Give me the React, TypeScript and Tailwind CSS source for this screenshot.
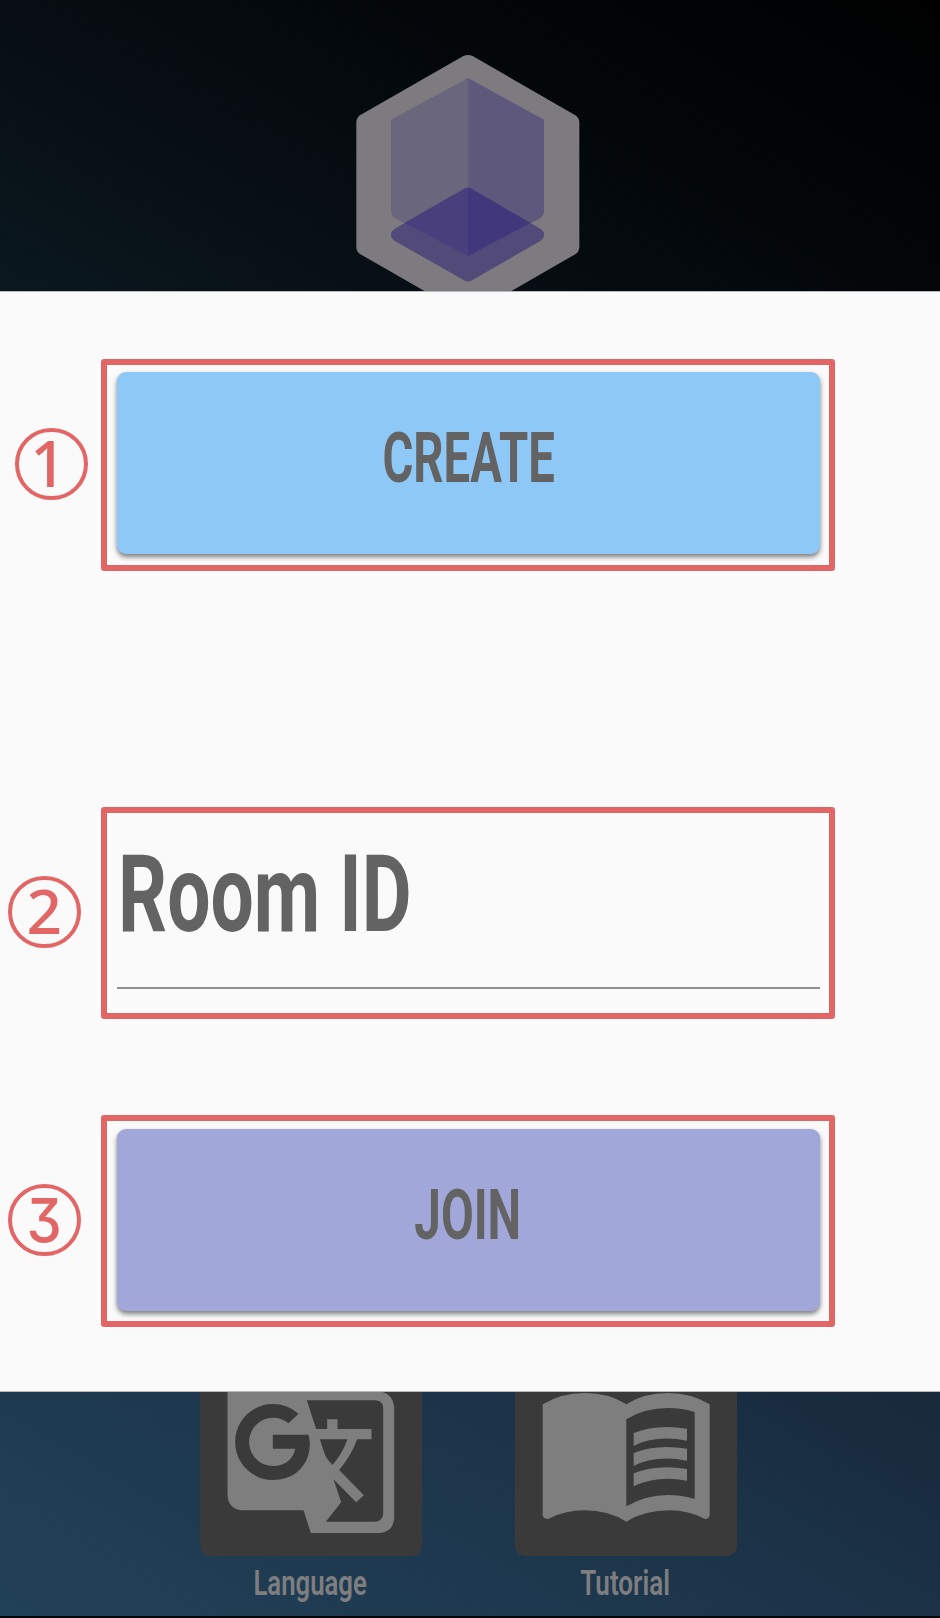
import type { ReactNode } from "react";

function Logo() {
  return (
    <svg viewBox="0 0 780 753" className="h-[251px] w-[260px]">
      <path
        d="M370 48Q384 42 398 48L706 226Q718 234 718 248V622Q718 635 707 642L398 820Q384 826 370 820L60 642Q49 635 49 622V248Q49 234 60 226Z"
        fill="#7d7b7f"
      />
      <path d="M384 114V648L168 536Q153 528 153 513V239Z" fill="#6a677d" />
      <path d="M384 114V648L598 536Q612 528 612 513V239Z" fill="#5d587c" />
      <path
        d="M372 447Q384 440 396 447L602 567Q624 584 602 602L396 721Q384 728 372 721L163 602Q142 584 163 567Z"
        fill="#524b7a"
      />
      <path d="M384 443Q378 443 372 447L193 549L384 648Z" fill="#493f7c" />
      <path d="M384 443Q390 443 396 447L571 549L384 648Z" fill="#40377c" />
    </svg>
  );
}

function TranslateIcon() {
  return (
    <svg viewBox="114 36 500 423" className="h-[141px] w-[167px] overflow-visible">
      <path
        d="M112 36H338L343 36H578Q608 45 612 80V415Q609 455 570 459H362L340 391H155Q115 386 112 347Z"
        fill="#7e7e7e"
      />
      <path
        d="M350 61H556Q579 63 579 84V402Q577 423 556 425H407L453 367L430 298L498 367L521 346L447 270Q482 229 501 178H544V147H442V118H411V147H378Z"
        fill="#3a3a3a"
      />
      <path d="M389 178H472Q457 220 427 255Q407 235 403 220Z" fill="#3a3a3a" />
      <path
        d="M325 101L295 130Q276 113 248 113C209 113 177 146 177 186S209 258 248 258C289 258 311 232 315 206H248V164H355Q359 184 359 192C359 255 313 300 248 300C186 300 135 249 135 186S186 72 248 72Q292 72 325 101Z"
        fill="#3a3a3a"
      />
    </svg>
  );
}

function BookIcon() {
  return (
    <svg viewBox="129 36 501 390" className="h-[130px] w-[167px] overflow-visible">
      <path
        d="M128 73Q184 39 254 39Q328 39 379 73Q430 39 505 39Q574 39 629 73V405Q627 417 615 417Q565 391 510 391Q433 391 379 425Q325 391 254 391Q194 391 144 417Q130 417 128 405Z"
        fill="#7e7e7e"
      />
      <path d="M379 118Q432 84 505 84Q546 84 584 96V357Q546 345 505 345Q437 345 379 379Z" fill="#3a3a3a" />
      <path
        d="M401 159Q469 131 561 146V182Q469 164 401 198ZM401 219Q469 191 561 206V242Q469 224 401 258ZM401 280Q469 252 561 267V302Q469 285 401 319Z"
        fill="#7e7e7e"
      />
    </svg>
  );
}

type StepProps = {
  n: number;
  indent: string;
  digit: string;
  children: ReactNode;
};

function Step({ n, indent, digit, children }: StepProps) {
  return (
    <div className="flex h-[212px] w-[835px] items-center">
      <div className="w-[100.5px] shrink-0 pb-[2px]">
        <div
          className={`flex size-[72.5px] items-center justify-center rounded-full border-[4.5px] border-[#e36666] leading-none text-[#e36666] ${indent}`}
        >
          <span className={digit}>{n}</span>
        </div>
      </div>
      <div className="h-full w-[734.5px] rounded-[3px] border-6 border-[#e36666] px-[10px]">{children}</div>
    </div>
  );
}

function Tile({ label, icon }: { label: ReactNode; icon: ReactNode }) {
  return (
    <div className="flex w-[222px] flex-col items-center">
      <div className="flex h-[163.5px] w-full justify-center rounded-b-[10px] bg-[#3a3a3a]">{icon}</div>
      <div className="mt-[8.5px] h-[40px] -translate-x-px text-[35px] leading-[40px] font-semibold whitespace-nowrap text-[#7e7e80]">
        {label}
      </div>
    </div>
  );
}

const buttonClass =
  "flex h-[182px] w-[703.5px] items-center justify-center rounded-[9px] text-[71px] leading-none font-bold text-[#636363] shadow-[0_3px_5px_rgba(0,0,0,0.5)]";

export default function App() {
  return (
    <main className="flex h-[1618px] w-[940px] flex-col overflow-hidden bg-[linear-gradient(210.2deg,#000_0%,#020609_13%,#070d12_25%,#0a171f_38%,#18293a_64.7%,#1c344a_78%,#214158_100%)] font-[Roboto,'Noto_Sans',sans-serif]">
      <header className="h-[291px] shrink-0 overflow-hidden pt-[40px] pl-[340px]">
        <Logo />
      </header>
      <section className="flex h-[1101px] shrink-0 flex-col border-y border-[#b8b8ba] bg-[#fafafa] pt-[67px]">
        <Step n={1} indent="ml-[15px]" digit="font-['Noto_Sans'] text-[63px] font-medium -translate-y-[2px] -translate-x-[3px]">
          <button className={`mt-[7px] bg-[#8ec8f6] ${buttonClass}`}>
            <span className="inline-block -translate-y-[6px] scale-x-[0.665]">CREATE</span>
          </button>
        </Step>
        <div className="mt-[236px]">
          <Step n={2} indent="ml-[8px]" digit="font-['Noto_Sans'] text-[62px] font-medium -translate-y-[2px]">
            <div className="h-[176px] w-[703.5px] border-b-2 border-[#8f8f8f] pt-[22px] text-[107px] leading-[120px] font-bold text-[#636363]">
              <span className="inline-block origin-left translate-x-px scale-x-[0.717] whitespace-nowrap">
                Room ID
              </span>
            </div>
          </Step>
        </div>
        <div className="mt-[96px]">
          <Step
            n={3}
            indent="ml-[8px]"
            digit="[font-family:Inter] text-[61px] font-medium [font-feature-settings:'cv09'] scale-x-[0.92]"
          >
            <button className={`mt-[8px] bg-[#a1a8d9] ${buttonClass}`}>
              <span className="inline-block -translate-x-px -translate-y-[6px] scale-x-[0.67]">JOIN</span>
            </button>
          </Step>
        </div>
      </section>
      <footer className="flex h-[224px] shrink-0 gap-[93px] pl-[200px]">
        <Tile label={<span className="inline-block scale-x-[0.735]">Language</span>} icon={<TranslateIcon />} />
        <Tile label={<span className="inline-block scale-x-[0.745]">Tutorial</span>} icon={<BookIcon />} />
      </footer>
      <div className="h-[2px] shrink-0 bg-[#020609]" />
    </main>
  );
}
